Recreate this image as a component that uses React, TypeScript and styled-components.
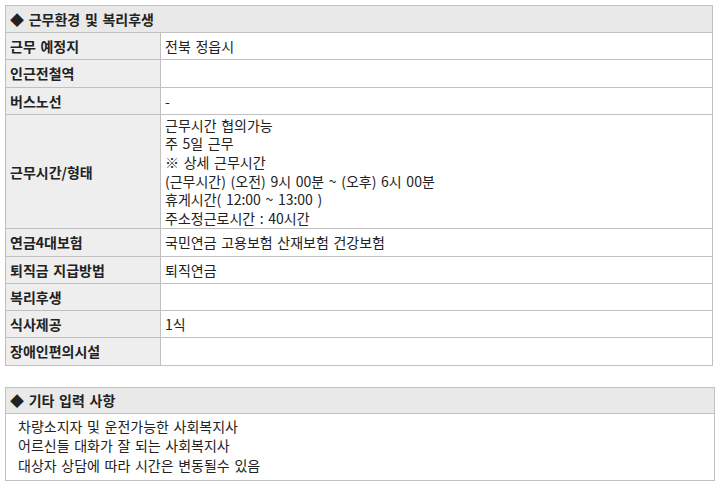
import React from "react";
import styled, { createGlobalStyle } from "styled-components";

const Global = createGlobalStyle`
  html, body { margin: 0; padding: 0; background: #fff; }
  body {
    font-family: "Noto Sans CJK KR", "Noto Sans", sans-serif;
    font-size: 14px;
    word-spacing: 1.5px;
    color: #222;
  }
`;

const Page = styled.div`
  padding: 5px 10px 5px 5px;
  display: flex;
  flex-direction: column;
  gap: 21px;
`;

const Table = styled.table`
  width: 708px;
  border-collapse: collapse;
  table-layout: fixed;
  border: 1px solid #c0c0c0;
`;

const HeadCell = styled.th`
  background: #e9e9e9;
  border: 1px solid #c0c0c0;
  text-align: left;
  font-weight: 700;
  height: 26px;
  padding: 0 4px;
  line-height: 18px;
`;

const Label = styled.th`
  background: #eeeeee;
  border: 1px solid #c0c0c0;
  text-align: left;
  font-weight: 700;
  padding: 4px 4px;
  height: 18.25px;
  line-height: 18px;
  vertical-align: middle;
`;

const Value = styled.td`
  border: 1px solid #c0c0c0;
  padding: 4px 4px;
  height: 18.25px;
  line-height: 18px;
  vertical-align: middle;
`;

const Lines = styled.div`
  display: flex;
  flex-direction: column;
  line-height: 18.6px;
  margin: -3px 0;
`;

const Box = styled.section`
  width: 708px;
  border: 1px solid #c0c0c0;
  display: flex;
  flex-direction: column;
`;

const BoxHead = styled.div`
  background: #e9e9e9;
  border-bottom: 1px solid #c0c0c0;
  height: 25px;
  padding: 0 4px;
  display: flex;
  align-items: center;
  font-weight: 700;
`;

const BoxBody = styled.div`
  padding: 3px 12px 5px;
  line-height: 19.5px;
  display: flex;
  flex-direction: column;
`;

const rows: [string, string | string[]][] = [
  ["근무 예정지", "전북 정읍시"],
  ["인근전철역", ""],
  ["버스노선", "-"],
  [
    "근무시간/형태",
    [
      "근무시간 협의가능",
      "주 5일 근무",
      "※ 상세 근무시간",
      "(근무시간) (오전) 9시 00분 ~ (오후) 6시 00분",
      "휴게시간( 12:00 ~ 13:00 )",
      "주소정근로시간 : 40시간",
    ],
  ],
  ["연금4대보험", "국민연금 고용보험 산재보험 건강보험"],
  ["퇴직금 지급방법", "퇴직연금"],
  ["복리후생", ""],
  ["식사제공", "1식"],
  ["장애인편의시설", ""],
];

export default function App() {
  return (
    <>
      <Global />
      <Page>
        <Table>
          <colgroup>
            <col style={{ width: 155 }} />
            <col />
          </colgroup>
          <thead>
            <tr>
              <HeadCell colSpan={2}>◆ 근무환경 및 복리후생</HeadCell>
            </tr>
          </thead>
          <tbody>
            {rows.map(([k, v]) => (
              <tr key={k}>
                <Label>{k}</Label>
                <Value>
                  {Array.isArray(v) ? (
                    <Lines>
                      {v.map((l) => (
                        <span key={l}>{l}</span>
                      ))}
                    </Lines>
                  ) : (
                    v
                  )}
                </Value>
              </tr>
            ))}
          </tbody>
        </Table>
        <Box>
          <BoxHead>◆ 기타 입력 사항</BoxHead>
          <BoxBody>
            <span>차량소지자 및 운전가능한 사회복지사</span>
            <span>어르신들 대화가 잘 되는 사회복지사</span>
            <span>대상자 상담에 따라 시간은 변동될수 있음</span>
          </BoxBody>
        </Box>
      </Page>
    </>
  );
}
